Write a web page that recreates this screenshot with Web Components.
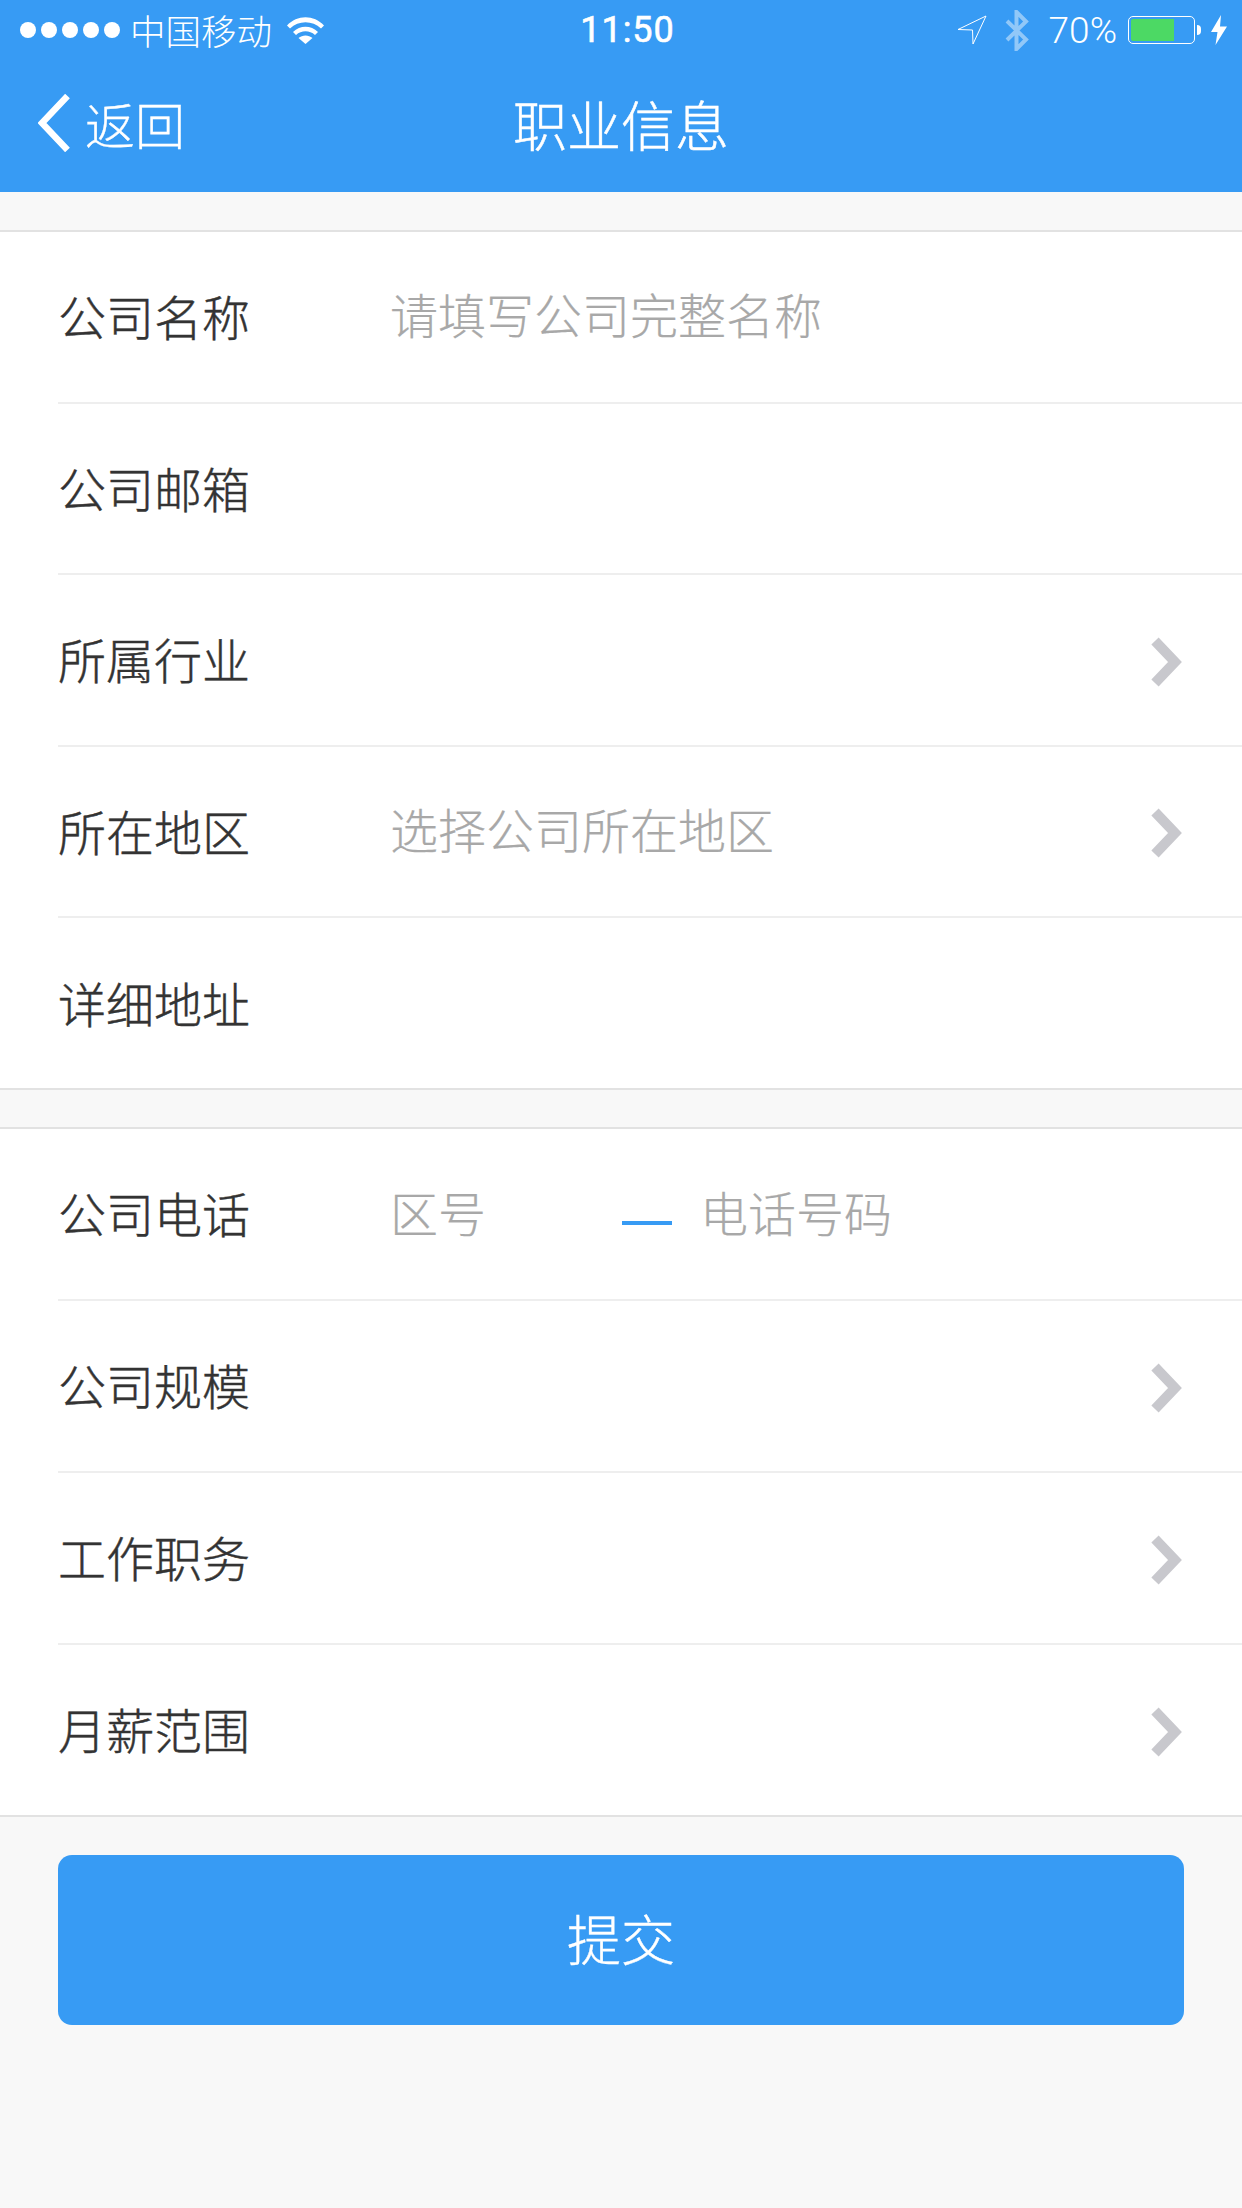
<!DOCTYPE html>
<html lang="zh">
<head>
<meta charset="utf-8">
<title>职业信息</title>
<style>
html,body{margin:0;padding:0;background:#f8f8f8;}
body{width:1242px;height:2208px;overflow:hidden;font-family:"Noto Sans CJK SC","Noto Sans",sans-serif;}
</style>
</head>
<body>
<job-page></job-page>

<script>
const templateStatus = document.createElement('template');
templateStatus.innerHTML = `
<style>
:host{display:grid;grid-template-columns:1fr auto 1fr;align-items:center;height:60px;padding:0 15px 0 20px;color:#fff;}
.left,.right{display:flex;align-items:center;}
.dots{display:flex;gap:5px;margin-right:10px;}
.dots i{width:16px;height:16px;border-radius:50%;background:#fff;}
.carrier{font-size:35.5px;font-weight:300;line-height:60px;}
.wifi{margin-left:15px;}
.time{font:400 36px "Roboto",sans-serif;letter-spacing:1px;padding-left:8px;-webkit-text-stroke:.6px #fff;}
.right{justify-content:flex-end;}
.pct{font:300 37px "Roboto",sans-serif;margin:0 11px 0 20px;}
.bt{margin-left:18px;}
.battery{display:flex;align-items:center;}
.shell{box-sizing:border-box;width:67px;height:28px;border:1.5px solid #fff;border-radius:5px;padding:2px;}
.shell div{width:43px;height:100%;background:#4cd964;border-radius:2px 0 0 2px;}
.nub{width:4px;height:10px;margin-left:2px;background:#fff;border-radius:0 5px 5px 0;}
.bolt{margin-left:10px;}
</style>
<div class="left">
  <div class="dots"><i></i><i></i><i></i><i></i><i></i></div>
  <span class="carrier">中国移动</span>
  <svg class="wifi" width="37" height="27" viewBox="0 0 37 27"><path d="M0 8.500C10 -2.500 27 -2.500 37 8.500L34 11.500C25.500 3 11.500 3 3 11.500Z" fill="#fff"/><path d="M6 15C13 8 24 8 31 15L28 18C22.500 13 14.500 13 9 18Z" fill="#fff"/><path d="M11.500 21C15.500 17.500 21.500 17.500 25.500 21L18.500 27Z" fill="#fff"/></svg>
</div>
<div class="time">11:50</div>
<div class="right">
  <svg width="30" height="30" viewBox="0 0 30 30"><path d="M1 14.500L29 1L16 29L15.500 15Z" fill="none" stroke="#fff" stroke-width="1"/></svg>
  <svg class="bt" width="24" height="41" viewBox="0 0 24 41" opacity=".45"><path d="M2 11L21 29.500L11.500 39V2L21 11.500L2 30" fill="none" stroke="#fff" stroke-width="4"/></svg>
  <span class="pct">70%</span>
  <div class="battery"><div class="shell"><div></div></div><div class="nub"></div></div>
  <svg class="bolt" width="16" height="30" viewBox="0 0 16 30"><path d="M10 0L0 17H6.500L4.500 30L16 11.500H9Z" fill="#fff"/></svg>
</div>`;
class StatusBar extends HTMLElement{
    constructor(){
        super();
        this.attachShadow({mode:'open'});
        this.shadowRoot.appendChild(templateStatus.content.cloneNode(true));
    }
}
window.customElements.define('status-bar',StatusBar);

const templateNav = document.createElement('template');
templateNav.innerHTML = `
<style>
:host{display:grid;grid-template-columns:1fr auto 1fr;align-items:center;box-sizing:border-box;height:132px;padding:0 38px 6px;color:#fff;}
.back{display:flex;align-items:center;font-size:50px;font-weight:300;-webkit-text-stroke:.3px #fff;}
.back svg{margin-right:15px;}
.title{font-size:54px;font-weight:300;-webkit-text-stroke:.5px #fff;}
</style>
<div class="back">
  <svg width="32" height="58" viewBox="0 0 32 58"><path d="M29.500 2L4 29L29.500 56" fill="none" stroke="#fff" stroke-width="6.500"/></svg>
  <span>返回</span>
</div>
<div class="title"><slot></slot></div>
<div></div>`;
class NavBar extends HTMLElement{
    constructor(){
        super();
        this.attachShadow({mode:'open'});
        this.shadowRoot.appendChild(templateNav.content.cloneNode(true));
    }
}
window.customElements.define('nav-bar',NavBar);

const templateRow = document.createElement('template');
templateRow.innerHTML = `
<style>
:host{display:block;padding-left:58px;background:#fff;}
.row{box-sizing:border-box;display:flex;align-items:center;height:var(--row-height,172px);padding-right:60px;border-bottom:2px solid #eee;}
:host([last]) .row{border-bottom:none;height:170px;}
.label{width:332px;flex:none;font-size:48px;color:#333;font-weight:300;padding-bottom:var(--label-pad,3px);-webkit-text-stroke:.45px #333;}
.value{flex:1;display:flex;align-items:center;font-size:48px;color:#a8a8a8;font-weight:300;margin-top:-7px;-webkit-text-stroke:.2px #a8a8a8;}
svg{display:none;margin-top:4px;}
:host([arrow]) svg{display:block;}
</style>
<div class="row">
  <div class="label"></div>
  <div class="value"><slot></slot></div>
  <svg width="32" height="50" viewBox="0 0 32 50"><path d="M5 4L25 25L5 46" fill="none" stroke="#c8c8cd" stroke-width="10"/></svg>
</div>`;
class FormRow extends HTMLElement{
    constructor(){
        super();
        this.attachShadow({mode:'open'});
        this.shadowRoot.appendChild(templateRow.content.cloneNode(true));
    }
    connectedCallback(){
        this.shadowRoot.querySelector('.label').textContent = this.getAttribute('label');
    }
}
window.customElements.define('form-row',FormRow);

const templateGroup = document.createElement('template');
templateGroup.innerHTML = `
<style>
:host{display:block;background:#fff;border-top:2px solid #e2e2e2;border-bottom:2px solid #e2e2e2;}
</style>
<slot></slot>`;
class FormGroup extends HTMLElement{
    constructor(){
        super();
        this.attachShadow({mode:'open'});
        this.shadowRoot.appendChild(templateGroup.content.cloneNode(true));
    }
}
window.customElements.define('form-group',FormGroup);

const templatePhone = document.createElement('template');
templatePhone.innerHTML = `
<style>
:host{display:flex;align-items:center;}
.area{width:232px;}
.dash{width:50px;height:4px;background:#379bf4;margin:24px 28px 0 0;}
</style>
<span class="area">区号</span>
<span class="dash"></span>
<span>电话号码</span>`;
class PhoneField extends HTMLElement{
    constructor(){
        super();
        this.attachShadow({mode:'open'});
        this.shadowRoot.appendChild(templatePhone.content.cloneNode(true));
    }
}
window.customElements.define('phone-field',PhoneField);

const templateSubmit = document.createElement('template');
templateSubmit.innerHTML = `
<style>
:host{display:flex;align-items:center;justify-content:center;box-sizing:border-box;height:170px;margin:38px 58px 0 58px;padding-bottom:6px;background:#379bf4;border-radius:14px;color:#fff;font-size:54px;font-weight:300;-webkit-text-stroke:.4px #fff;}
</style>
<slot></slot>`;
class SubmitButton extends HTMLElement{
    constructor(){
        super();
        this.attachShadow({mode:'open'});
        this.shadowRoot.appendChild(templateSubmit.content.cloneNode(true));
    }
}
window.customElements.define('submit-button',SubmitButton);

const templatePage = document.createElement('template');
templatePage.innerHTML = `
<style>
:host{display:block;width:1242px;height:2208px;background:#f8f8f8;font-family:"Noto Sans CJK SC","Noto Sans",sans-serif;}
header{background:#379bf4;}
main{padding-top:38px;display:flex;flex-direction:column;}
form-group + form-group{margin-top:37px;--label-pad:5px;}
.first{--row-height:171.5px;}
</style>
<header>
  <status-bar></status-bar>
  <nav-bar>职业信息</nav-bar>
</header>
<main>
  <form-group class="first">
    <form-row label="公司名称">请填写公司完整名称</form-row>
    <form-row label="公司邮箱"></form-row>
    <form-row label="所属行业" arrow></form-row>
    <form-row label="所在地区" arrow>选择公司所在地区</form-row>
    <form-row label="详细地址" last></form-row>
  </form-group>
  <form-group>
    <form-row label="公司电话"><phone-field></phone-field></form-row>
    <form-row label="公司规模" arrow></form-row>
    <form-row label="工作职务" arrow></form-row>
    <form-row label="月薪范围" arrow last></form-row>
  </form-group>
  <submit-button>提交</submit-button>
</main>`;
class JobPage extends HTMLElement{
    constructor(){
        super();
        this.attachShadow({mode:'open'});
        this.shadowRoot.appendChild(templatePage.content.cloneNode(true));
    }
}
window.customElements.define('job-page',JobPage);
</script>
</body>
</html>
